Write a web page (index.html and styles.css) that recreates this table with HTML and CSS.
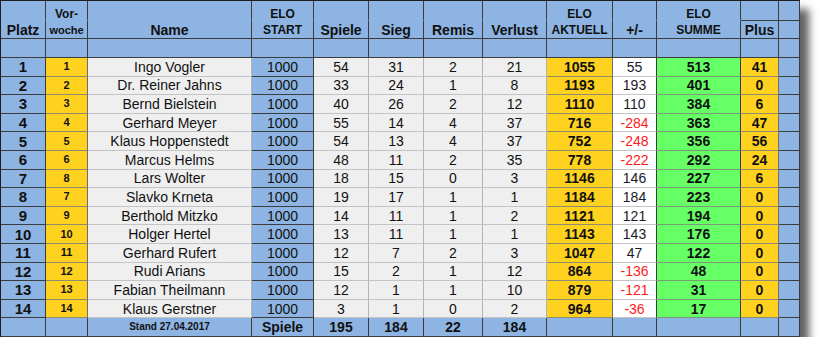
FILE: index.html
```html
<!DOCTYPE html>
<html lang="de">
<head>
<meta charset="utf-8">
<link rel="stylesheet" href="styles.css">
</head>
<body>
<div class="wrap">
<table class="elo">
<colgroup>
<col class="c-platz"><col class="c-vw"><col class="c-name"><col class="c-start"><col class="c-spiele"><col class="c-sieg"><col class="c-remis"><col class="c-verl"><col class="c-akt"><col class="c-pm"><col class="c-summe"><col class="c-plus"><col class="c-x">
</colgroup>
<thead>
<tr class="h1">
<th class="b nob"></th><th class="b nob sm">Vor-</th><th class="b nob"></th><th class="b nob sm">ELO</th><th class="b nob"></th><th class="b nob"></th><th class="b nob"></th><th class="b nob"></th><th class="b nob sm">ELO</th><th class="b nob"></th><th class="b nob sm">ELO</th><th class="b"></th><th class="b"></th>
</tr>
<tr class="h2">
<th class="b lg">Platz</th><th class="b sm">woche</th><th class="b lg">Name</th><th class="b md">START</th><th class="b lg">Spiele</th><th class="b lg">Sieg</th><th class="b lg">Remis</th><th class="b lg">Verlust</th><th class="b md">AKTUELL</th><th class="b lg">+/-</th><th class="b md">SUMME</th><th class="b lg">Plus</th><th class="b"></th>
</tr>
<tr class="h3">
<th class="b"></th><th class="b"></th><th class="b"></th><th class="b"></th><th class="b"></th><th class="b"></th><th class="b"></th><th class="b"></th><th class="b"></th><th class="b"></th><th class="b"></th><th class="b"></th><th class="b"></th>
</tr>
</thead>
<tbody>
<tr><td class="b pl">1</td><td class="y vw">1</td><td class="g">Ingo Vogler</td><td class="b">1000</td><td class="g">54</td><td class="g">31</td><td class="g">2</td><td class="g">21</td><td class="y bd">1055</td><td class="w">55</td><td class="gr bd">513</td><td class="y bd">41</td><td class="b"></td></tr>
<tr><td class="b pl">2</td><td class="y vw">2</td><td class="g">Dr. Reiner Jahns</td><td class="b">1000</td><td class="g">33</td><td class="g">24</td><td class="g">1</td><td class="g">8</td><td class="y bd">1193</td><td class="w">193</td><td class="gr bd">401</td><td class="y bd">0</td><td class="b"></td></tr>
<tr><td class="b pl">3</td><td class="y vw">3</td><td class="g">Bernd Bielstein</td><td class="b">1000</td><td class="g">40</td><td class="g">26</td><td class="g">2</td><td class="g">12</td><td class="y bd">1110</td><td class="w">110</td><td class="gr bd">384</td><td class="y bd">6</td><td class="b"></td></tr>
<tr><td class="b pl">4</td><td class="y vw">4</td><td class="g">Gerhard Meyer</td><td class="b">1000</td><td class="g">55</td><td class="g">14</td><td class="g">4</td><td class="g">37</td><td class="y bd">716</td><td class="w neg">-284</td><td class="gr bd">363</td><td class="y bd">47</td><td class="b"></td></tr>
<tr><td class="b pl">5</td><td class="y vw">5</td><td class="g">Klaus Hoppenstedt</td><td class="b">1000</td><td class="g">54</td><td class="g">13</td><td class="g">4</td><td class="g">37</td><td class="y bd">752</td><td class="w neg">-248</td><td class="gr bd">356</td><td class="y bd">56</td><td class="b"></td></tr>
<tr><td class="b pl">6</td><td class="y vw">6</td><td class="g">Marcus Helms</td><td class="b">1000</td><td class="g">48</td><td class="g">11</td><td class="g">2</td><td class="g">35</td><td class="y bd">778</td><td class="w neg">-222</td><td class="gr bd">292</td><td class="y bd">24</td><td class="b"></td></tr>
<tr><td class="b pl">7</td><td class="y vw">8</td><td class="g">Lars Wolter</td><td class="b">1000</td><td class="g">18</td><td class="g">15</td><td class="g">0</td><td class="g">3</td><td class="y bd">1146</td><td class="w">146</td><td class="gr bd">227</td><td class="y bd">6</td><td class="b"></td></tr>
<tr><td class="b pl">8</td><td class="y vw">7</td><td class="g">Slavko Krneta</td><td class="b">1000</td><td class="g">19</td><td class="g">17</td><td class="g">1</td><td class="g">1</td><td class="y bd">1184</td><td class="w">184</td><td class="gr bd">223</td><td class="y bd">0</td><td class="b"></td></tr>
<tr><td class="b pl">9</td><td class="y vw">9</td><td class="g">Berthold Mitzko</td><td class="b">1000</td><td class="g">14</td><td class="g">11</td><td class="g">1</td><td class="g">2</td><td class="y bd">1121</td><td class="w">121</td><td class="gr bd">194</td><td class="y bd">0</td><td class="b"></td></tr>
<tr><td class="b pl">10</td><td class="y vw">10</td><td class="g">Holger Hertel</td><td class="b">1000</td><td class="g">13</td><td class="g">11</td><td class="g">1</td><td class="g">1</td><td class="y bd">1143</td><td class="w">143</td><td class="gr bd">176</td><td class="y bd">0</td><td class="b"></td></tr>
<tr><td class="b pl">11</td><td class="y vw">11</td><td class="g">Gerhard Rufert</td><td class="b">1000</td><td class="g">12</td><td class="g">7</td><td class="g">2</td><td class="g">3</td><td class="y bd">1047</td><td class="w">47</td><td class="gr bd">122</td><td class="y bd">0</td><td class="b"></td></tr>
<tr><td class="b pl">12</td><td class="y vw">12</td><td class="g">Rudi Arians</td><td class="b">1000</td><td class="g">15</td><td class="g">2</td><td class="g">1</td><td class="g">12</td><td class="y bd">864</td><td class="w neg">-136</td><td class="gr bd">48</td><td class="y bd">0</td><td class="b"></td></tr>
<tr><td class="b pl">13</td><td class="y vw">13</td><td class="g">Fabian Theilmann</td><td class="b">1000</td><td class="g">12</td><td class="g">1</td><td class="g">1</td><td class="g">10</td><td class="y bd">879</td><td class="w neg">-121</td><td class="gr bd">31</td><td class="y bd">0</td><td class="b"></td></tr>
<tr><td class="b pl">14</td><td class="y vw">14</td><td class="g">Klaus Gerstner</td><td class="b">1000</td><td class="g">3</td><td class="g">1</td><td class="g">0</td><td class="g">2</td><td class="y bd">964</td><td class="w neg">-36</td><td class="gr bd">17</td><td class="y bd">0</td><td class="b"></td></tr>
</tbody>
<tfoot>
<tr><td class="b"></td><td class="b"></td><td class="b stand">Stand 27.04.2017</td><td class="b tot">Spiele</td><td class="b tot">195</td><td class="b tot">184</td><td class="b tot">22</td><td class="b tot">184</td><td class="b"></td><td class="b"></td><td class="b"></td><td class="b"></td><td class="b"></td></tr>
</tfoot>
</table>
</div>
</body>
</html>
```
FILE: styles.css
```css
html, body {
  margin: 0;
  padding: 0;
  background: #ffffff;
}
.wrap {
  width: 800px;
  box-shadow: 9px 9px 8px rgba(0, 0, 0, 0.62);
}
.elo {
  border-collapse: separate;
  border-spacing: 0;
  table-layout: fixed;
  width: 800px;
  border-top: 1px solid #1e1e1e;
  border-left: 1px solid #1e1e1e;
  font-family: "Liberation Sans", Arial, sans-serif;
  color: #111;
}
.c-platz { width: 45px; }
.c-vw { width: 42px; }
.c-name { width: 164px; }
.c-start { width: 62px; }
.c-spiele { width: 55px; }
.c-sieg { width: 55px; }
.c-remis { width: 59px; }
.c-verl { width: 64px; }
.c-akt { width: 66px; }
.c-pm { width: 44px; }
.c-summe { width: 84px; }
.c-plus { width: 38px; }
.c-x { width: 21px; }

.elo th, .elo td {
  padding: 0;
  text-align: center;
  vertical-align: middle;
  white-space: nowrap;
  overflow: hidden;
  border-right: 1px solid #3c3c3c;
  border-bottom: 1px solid #3c3c3c;
  line-height: 1;
}
.h1 { height: 20px; }
.h2 { height: 18px; }
.h3 { height: 19px; }
tbody tr { height: 18.6px; }
tfoot tr { height: 18.5px; }

.elo th { font-weight: bold; }
.sm { font-size: 11px; }
.md { font-size: 12px; }
.lg { font-size: 14px; }
.h1 th { padding-top: 6px; }
.h1 .sm { font-size: 12px; }
.h2 th { padding-top: 1px; }
.nob { border-bottom-color: #8db4e2 !important; }

.b { background: #8db4e2; }
.y { background: #ffd21f; border-right-color: #6e6e6e !important; border-bottom-color: #8f8a70 !important; }
.g { background: #efefef; border-right-color: #b4b4b4 !important; border-bottom-color: #c4c4c4 !important; }
.w { background: #ffffff; color: #1a1a2a; border-right-color: #3c3c3c !important; border-bottom-color: #c4c4c4 !important; }
.gr { background: #66ff66; border-bottom-color: #7a9a7a !important; }

tbody td { font-size: 14px; }
.pl { font-weight: bold; font-size: 15px; }
.vw { font-weight: bold; font-size: 11px; padding-top: 2px; }
.bd { font-weight: bold; font-size: 14px; }
.elo td.neg { color: #ff1a1a; }

.stand { font-weight: bold; font-size: 10px; padding-top: 1px; }
.tot { font-weight: bold; font-size: 14px; }
```
